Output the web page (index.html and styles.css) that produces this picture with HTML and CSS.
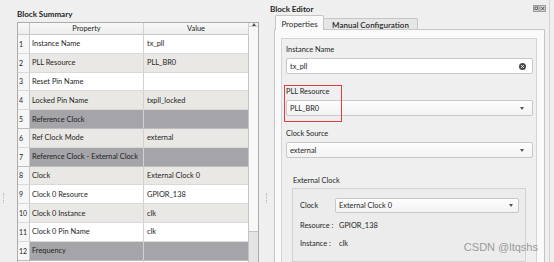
FILE: index.html
```html
<!DOCTYPE html>
<html lang="en">
<head>
    <meta charset="UTF-8">
    <title>Block Editor</title>
    <link rel="stylesheet" href="styles.css">
</head>
<body>
    <div class="window">
        <div class="edge"><span class="grip"></span></div>

        <!-- Left dock: block summary table -->
        <section class="summary">
            <div class="summary-title">Block Summary</div>
            <div class="table-frame">
                <div class="grid">
                    <div class="cell head num"></div>
                    <div class="cell head">Property</div>
                    <div class="cell head">Value</div>

                    <div class="row"><div class="cell num">1</div><div class="cell">Instance Name</div><div class="cell val">tx_pll</div></div>
                    <div class="row alt"><div class="cell num">2</div><div class="cell">PLL Resource</div><div class="cell val">PLL_BR0</div></div>
                    <div class="row"><div class="cell num">3</div><div class="cell">Reset Pin Name</div><div class="cell val"></div></div>
                    <div class="row alt"><div class="cell num">4</div><div class="cell">Locked Pin Name</div><div class="cell val">txpll_locked</div></div>
                    <div class="row section"><div class="cell num">5</div><div class="cell">Reference Clock</div><div class="cell val"></div></div>
                    <div class="row alt"><div class="cell num">6</div><div class="cell">Ref Clock Mode</div><div class="cell val">external</div></div>
                    <div class="row section"><div class="cell num">7</div><div class="cell">Reference Clock - External Clock</div><div class="cell val"></div></div>
                    <div class="row alt"><div class="cell num">8</div><div class="cell">Clock</div><div class="cell val">External Clock 0</div></div>
                    <div class="row"><div class="cell num">9</div><div class="cell">Clock 0 Resource</div><div class="cell val">GPIOR_138</div></div>
                    <div class="row alt"><div class="cell num">10</div><div class="cell">Clock 0 Instance</div><div class="cell val">clk</div></div>
                    <div class="row"><div class="cell num">11</div><div class="cell">Clock 0 Pin Name</div><div class="cell val">clk</div></div>
                    <div class="row section"><div class="cell num">12</div><div class="cell">Frequency</div><div class="cell val"></div></div>
                    <div class="row"><div class="cell num"></div><div class="cell"></div><div class="cell val"></div></div>
                </div>
                <div class="vscroll">
                    <div class="scroll-arrow"><span class="tri-up"></span></div>
                    <div class="scroll-track"><div class="scroll-thumb"></div></div>
                </div>
            </div>
        </section>

        <div class="splitter"><span class="grip"></span></div>

        <!-- Right dock: block editor -->
        <section class="dock">
            <div class="dock-title">
                <span>Block Editor</span>
                <svg class="dock-buttons" width="13" height="7" viewBox="0 0 13 7">
                    <rect x="0.5" y="0.5" width="5.5" height="6" fill="#d4d4d4" stroke="#9a9a9a"/>
                    <rect x="2" y="2" width="2.5" height="2.5" fill="none" stroke="#555" stroke-width="0.8"/>
                    <rect x="7" y="0.5" width="5.5" height="6" fill="#d4d4d4" stroke="#9a9a9a"/>
                    <path d="M8.3 2l3 3M11.3 2l-3 3" stroke="#444" stroke-width="0.9"/>
                </svg>
            </div>

            <div class="tabs">
                <div class="tab active">Properties</div>
                <div class="tab">Manual Configuration</div>
            </div>

            <div class="pane">
                <div class="form">
                    <div class="field">
                        <div class="field-label">Instance Name</div>
                        <div class="input">
                            <span>tx_pll</span>
                            <svg class="clear" width="7" height="7" viewBox="0 0 7 7">
                                <circle cx="3.5" cy="3.5" r="3.5" fill="#4a4a4a"/>
                                <path d="M2.2 2.2l2.6 2.6M4.8 2.2l-2.6 2.6" stroke="#fff" stroke-width="0.9"/>
                            </svg>
                        </div>
                    </div>

                    <div class="field marked">
                        <div class="field-label">PLL Resource</div>
                        <div class="combo"><span>PLL_BR0</span><span class="tri-down"></span></div>
                        <div class="highlight"></div>
                    </div>

                    <div class="field">
                        <div class="field-label">Clock Source</div>
                        <div class="combo"><span>external</span><span class="tri-down"></span></div>
                    </div>

                    <div class="group">
                        <div class="group-title">External Clock</div>
                        <div class="group-box">
                            <div class="g-label">Clock</div>
                            <div class="combo small"><span>External Clock 0</span><span class="tri-down"></span></div>
                            <div class="g-label">Resource :</div>
                            <div class="g-value">GPIOR_138</div>
                            <div class="g-label">Instance :</div>
                            <div class="g-value">clk</div>
                        </div>
                    </div>
                </div>
            </div>
        </section>
    </div>

    <div class="watermark">CSDN @ltqshs</div>
</body>
</html>
```

FILE: styles.css
```css
* {
    box-sizing: border-box;
}

html, body {
    margin: 0;
    height: 100%;
}

body {
    background-color: #efefef;
    font-family: Lato, "Noto Sans", sans-serif;
    font-size: 7.4px;
    color: #1e1e1e;
    overflow: hidden;
    position: relative;
}

.window {
    display: flex;
    height: 262px;
}

/* Splitter grips */
.edge {
    width: 17px;
    padding: 193px 0 0 3px;
}

.splitter {
    width: 11px;
    padding: 193px 0 0 7px;
}

.grip {
    display: block;
    width: 1px;
    height: 10px;
    border-left: 1px dotted #b4b4b4;
}

/* Block summary */
.summary {
    width: 242px;
    display: flex;
    flex-direction: column;
}

.summary-title {
    height: 22px;
    padding-top: 9px;
    line-height: 10px;
    font-size: 8px;
    font-weight: 700;
}

.table-frame {
    flex: 1;
    display: flex;
    border: 1px solid #acacac;
    border-bottom: none;
    background-color: #ffffff;
    overflow: hidden;
}

.grid {
    display: grid;
    grid-template-columns: 12px 114px 105px;
    grid-template-rows: 12px;
    grid-auto-rows: 18.8px;
}

.row {
    display: contents;
}

.cell {
    display: flex;
    align-items: center;
    padding-left: 2px;
    white-space: nowrap;
    overflow: hidden;
    border-right: 1px solid #d2d2d2;
    border-bottom: 1px solid #d9d9d9;
    background-color: #ffffff;
}

.cell.val {
    padding-left: 3px;
    border-right-color: #c4c4c4;
}

.cell.head {
    justify-content: center;
    padding-left: 0;
    background: linear-gradient(#f8f8f8, #ededed);
    border-bottom-color: #c8c8c8;
}

.cell.num {
    padding-left: 1px;
    font-size: 7px;
    background-color: #f6f6f6;
    border-right-color: #c8c8c8;
}

.row.alt > .cell {
    background-color: #e9e8e4;
}

.row.section > .cell {
    background-color: #a5a4a9;
    border-bottom-color: #bdbdbd;
}

.row > .cell.num {
    background-color: #f6f6f6;
}

/* Scrollbar */
.vscroll {
    width: 9px;
    display: flex;
    flex-direction: column;
}

.scroll-arrow {
    height: 12px;
    display: flex;
    align-items: center;
    justify-content: center;
    background-color: #f1f1f1;
    border-bottom: 1px solid #d0d0d0;
}

.tri-up {
    width: 0;
    height: 0;
    border-left: 2.5px solid transparent;
    border-right: 2.5px solid transparent;
    border-bottom: 3px solid #505050;
}

.scroll-track {
    flex: 1;
    padding-top: 204px;
    background-color: #f8f8f8;
}

.scroll-thumb {
    height: 40px;
    background-color: #e4e4e4;
    border-top: 1px solid #c4c4c4;
}

/* Block editor dock */
.dock {
    width: 280px;
    display: flex;
    flex-direction: column;
    border-right: 1px solid #d4d4d4;
}

.dock-title {
    height: 20px;
    display: flex;
    justify-content: space-between;
    align-items: flex-start;
    padding: 4px 3px 0 0;
    line-height: 10px;
    font-size: 8px;
    font-weight: 700;
}

.dock-buttons {
    display: block;
    margin-top: 1px;
}

.tabs {
    display: flex;
    align-items: flex-end;
    height: 14px;
    margin-left: 5px;
}

.tab {
    height: 11px;
    margin-left: -1px;
    padding: 1px 8px 0;
    display: flex;
    align-items: center;
    justify-content: center;
    font-size: 8px;
    font-weight: 600;
    color: #2a2a2a;
    background-color: #e6e6e6;
    border: 1px solid #c6c6c6;
    border-bottom: none;
    border-radius: 2px 2px 0 0;
}

.tab.active {
    position: relative;
    z-index: 1;
    width: 49px;
    height: 15px;
    margin-left: 0;
    margin-bottom: -1px;
    padding-top: 2px;
    font-weight: 400;
    background-color: #fafafa;
}

.pane {
    flex: 1;
    margin: 0 4px;
    padding: 8px 7px 0 6px;
    background-color: #fafafa;
    border: 1px solid #c6c6c6;
    border-bottom: none;
    display: flex;
    flex-direction: column;
}

.form {
    flex: 1;
    padding: 5px 3px 0 4px;
    background-color: #efefef;
    border: 1px solid #d4d4d4;
    border-bottom: none;
}

.field {
    position: relative;
    margin-bottom: 12px;
}

.field-label {
    height: 12px;
    line-height: 12px;
}

.input,
.combo {
    display: flex;
    align-items: center;
    justify-content: space-between;
    margin-top: 2px;
    height: 16px;
    padding: 0 6px 0 3px;
    border: 1px solid #c8c8c8;
    border-radius: 2px;
}

.input {
    background-color: #ffffff;
}

.combo {
    height: 16px;
    padding-right: 8px;
    background: linear-gradient(#fdfdfd, #f3f3f3);
}

.clear {
    display: block;
}

.tri-down {
    width: 0;
    height: 0;
    border-left: 2.5px solid transparent;
    border-right: 2.5px solid transparent;
    border-top: 3px solid #555555;
}

/* Red annotation box */
.highlight {
    position: absolute;
    left: -2px;
    top: -1px;
    width: 58px;
    height: 37px;
    border: 1.5px solid #e33b3e;
}

.group {
    margin: 17px 7px 0 6px;
}

.group-title {
    height: 12px;
    line-height: 12px;
    padding-left: 1px;
    margin-bottom: 1px;
}

.group-box {
    display: grid;
    grid-template-columns: 35px 1fr;
    grid-auto-rows: 12px;
    grid-template-rows: 15px;
    row-gap: 6px;
    align-items: center;
    padding: 9px 6px 12px 7px;
    background-color: #ececec;
    border: 1px solid #d2d2d2;
}

.g-label {
    white-space: nowrap;
}

.combo.small {
    margin-top: 0;
    height: 15px;
    padding-right: 5px;
}

.g-value {
    padding-left: 4px;
}

.watermark {
    position: absolute;
    right: 16px;
    top: 240px;
    line-height: 14px;
    font-family: "Liberation Sans", Arial, sans-serif;
    font-size: 11px;
    color: #9a9a9a;
}
```
